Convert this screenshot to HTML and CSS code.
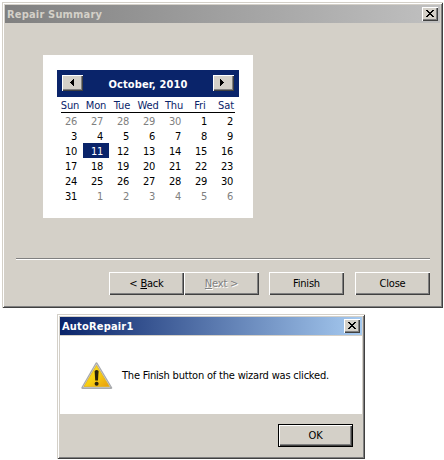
FILE: index.html
```
<!DOCTYPE html>
<html lang="en">
<head>
<meta charset="utf-8">
<title>Repair Summary</title>
<link rel="stylesheet" href="styles.css">
</head>
<body>
<section class="window wizard">
  <header class="titlebar inactive"><span class="caption">Repair Summary</span>
    <button class="btn close" aria-label="Close"><svg width="8" height="7" viewBox="0 0 8 7" shape-rendering="crispEdges"><path d="M0 0h2v1h1v1h2v-1h1v-1h2v1h-1v1h-1v1h-1v1h1v1h1v1h1v1h-2v-1h-1v-1h-2v1h-1v1h-2v-1h1v-1h1v-1h1v-1h-1v-1h-1v-1h-1z"/></svg></button>
  </header>
  <div class="calendar">
    <div class="month">
      <button class="btn nav" aria-label="Previous"><svg width="4" height="7" viewBox="0 0 4 7" shape-rendering="crispEdges"><path d="M3 0h1v7h-1v-1h-1v-1h-1v-1h-1v-1h1v-1h1v-1h1z"/></svg></button>
      <span class="month-name">October, 2010</span>
      <button class="btn nav" aria-label="Next"><svg width="4" height="7" viewBox="0 0 4 7" shape-rendering="crispEdges"><path d="M0 0h1v1h1v1h1v1h1v1h-1v1h-1v1h-1v1h-1z"/></svg></button>
    </div>
    <div class="weekdays"><span>Sun</span><span>Mon</span><span>Tue</span><span>Wed</span><span>Thu</span><span>Fri</span><span>Sat</span></div>
    <div class="days">
      <span class="out">26</span><span class="out">27</span><span class="out">28</span><span class="out">29</span><span class="out">30</span><span>1</span><span>2</span>
      <span>3</span><span>4</span><span>5</span><span>6</span><span>7</span><span>8</span><span>9</span>
      <span>10</span><span class="selected">11</span><span>12</span><span>13</span><span>14</span><span>15</span><span>16</span>
      <span>17</span><span>18</span><span>19</span><span>20</span><span>21</span><span>22</span><span>23</span>
      <span>24</span><span>25</span><span>26</span><span>27</span><span>28</span><span>29</span><span>30</span>
      <span>31</span><span class="out">1</span><span class="out">2</span><span class="out">3</span><span class="out">4</span><span class="out">5</span><span class="out">6</span>
    </div>
  </div>
  <hr class="rule">
  <footer class="actions">
    <button class="btn push"><span>&lt; <u>B</u>ack</span></button>
    <button class="btn push disabled"><span><u>N</u>ext &gt;</span></button>
    <button class="btn push finish"><span>Finish</span></button>
    <button class="btn push last"><span>Close</span></button>
  </footer>
</section>
<section class="window dialog">
  <header class="titlebar active"><span class="caption">AutoRepair1</span>
    <button class="btn close" aria-label="Close"><svg width="8" height="7" viewBox="0 0 8 7" shape-rendering="crispEdges"><path d="M0 0h2v1h1v1h2v-1h1v-1h2v1h-1v1h-1v1h-1v1h1v1h1v1h1v1h-2v-1h-1v-1h-2v1h-1v1h-2v-1h1v-1h1v-1h1v-1h-1v-1h-1v-1h-1z"/></svg></button>
  </header>
  <div class="message">
    <svg class="warning" width="32" height="28" viewBox="0 0 32 28">
      <defs><linearGradient id="amber" x1="0" y1="0" x2="1" y2="1"><stop offset="0" stop-color="#ffe52c"/><stop offset=".5" stop-color="#f8d010"/><stop offset="1" stop-color="#e89c10"/></linearGradient></defs>
      <path d="M15.5 1.5L30 25.8H1.5z" fill="#aaa" stroke="#a9abae" stroke-width="2.4" stroke-linejoin="round"/>
      <path d="M15.5 2.4L29 25H2.4z" fill="#d0d1d2" stroke="#d0d1d2" stroke-width="1" stroke-linejoin="round"/>
      <path d="M15.5 3.4L28.4 24.5H3z" fill="url(#amber)" stroke="#e2b212" stroke-width=".7"/>
      <path d="M13.6 9q2-2 4 0l-.6 9.6h-2.8z" fill="#29220c"/><circle cx="15.6" cy="21.7" r="2" fill="#29220c"/>
    </svg>
    <span class="text">The Finish button of the wizard was clicked.</span>
  </div>
  <footer class="confirm"><button class="btn push default"><span>OK</span></button></footer>
</section>
</body>
</html>
```
FILE: styles.css
```
* { box-sizing: border-box; }
body { margin: 0; padding: 2px; width: 444px; height: 460px; overflow: hidden; background: #fff; color: #000; font: 11px/15px "DejaVu Sans Condensed", "DejaVu Sans", sans-serif; }
.window { background: #d4d0c8; padding: 3px; box-shadow: inset 1px 1px #d4d0c8, inset -1px -1px #404040, inset 2px 2px #fff, inset -2px -2px #808080; }
.wizard { width: 441px; height: 306px; }
.dialog { width: 308px; height: 145px; margin: 6px 0 0 55px; }
.titlebar { display: flex; align-items: center; justify-content: space-between; height: 18px; padding: 0 2px; color: #d4d0c8; }
.inactive { background: linear-gradient(90deg, #808080, #c0c0c0); }
.active { background: linear-gradient(90deg, #0a246a, #a6caf0); color: #fff; }
.caption, .month-name { font-weight: bold; white-space: nowrap; }
.caption { letter-spacing: .18px; }
.month-name { letter-spacing: .1px; padding-top: 2px; }
.btn { display: flex; align-items: center; justify-content: center; flex: none; margin: 0; padding: 0; border: 0; background: #d4d0c8; color: #000; font: inherit; box-shadow: inset 1px 1px #fff, inset -1px -1px #404040, inset -2px -2px #808080; }
.close { width: 16px; height: 14px; padding: 0 1px 1px 0; }
.calendar { width: 210px; height: 163px; margin: 32px 0 0 38px; padding: 15px 14px 0; background: #fff; }
.month { display: flex; align-items: center; justify-content: space-between; height: 27px; padding: 0 5px 1px; background: #0a246a; color: #fff; }
.nav { width: 21px; height: 16px; padding: 0 2px 1px 0; }
.weekdays { display: grid; grid-template-columns: repeat(7, 26px); height: 16px; margin: 0 4px 0 4px; border-bottom: 1px solid #000; color: #0a246a; text-align: center; line-height: 17px; letter-spacing: -.15px; }
.weekdays span { margin: 0 4px 0 -4px; }
.days { display: grid; grid-template-columns: repeat(7, 26px); grid-auto-rows: 15px; text-align: right; line-height: 17px; letter-spacing: -.3px; }
.days span { height: 15px; padding-right: 6px; }
.days .out { color: #808080; }
.days .selected { background: #0a246a; color: #fff; }
.rule { height: 2px; margin: 40px 10px 0 11px; border: 0; border-top: 1px solid #808080; background: #fff; }
.actions { display: flex; margin: 12px 0 0 104px; }
.push { width: 75px; height: 23px; letter-spacing: -.2px; }
.finish { margin-left: 10px; }
.last { margin-left: 11px; }
.disabled { color: #808080; text-shadow: 1px 1px #fff; }
.message { display: flex; height: 79px; padding: 26px 0 0 21px; border-top: 1px solid #d4d0c8; background: #fff; }
.text { margin: 6px 0 0 9px; white-space: nowrap; letter-spacing: -.2px; }
.confirm { padding: 10px 0 0 218px; }
.default { border: 1px solid #000; }
```
